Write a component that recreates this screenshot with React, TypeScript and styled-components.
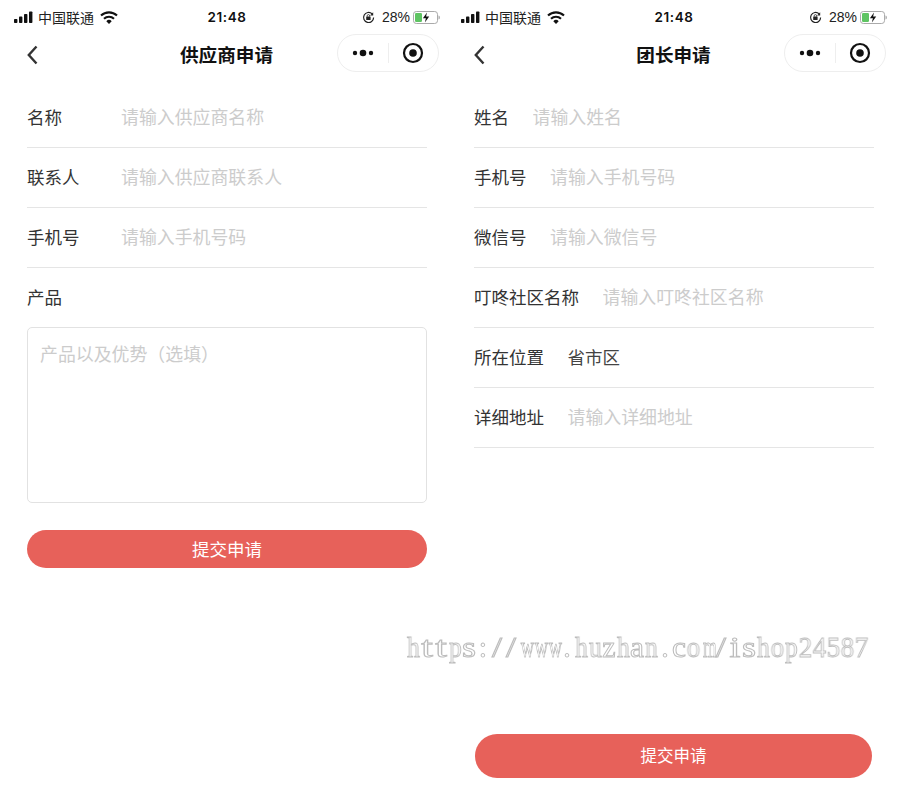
import React from 'react'
import styled, { createGlobalStyle } from 'styled-components'

const GlobalStyle = createGlobalStyle`
	html, body {
		margin: 0;
		padding: 0;
		background: #fff;
	}
	* {
		box-sizing: border-box;
	}
`

const CJK = `"Noto Sans CJK SC", "Noto Sans", sans-serif`
const WATERMARK = 'https://www.huzhan.com/ishop24587'

// cells are all 14px wide, so each letter gets stretched to roughly fill its cell
const CHAR_SCALE: Record<string, number> = {
	w: 0.62, m: 0.6, h: 0.85, n: 0.85, u: 0.85, p: 0.85, o: 0.9, t: 1.4, s: 1.2, i: 1.3, a: 1.05, c: 1.05, z: 1, '.': 1, ':': 1, '/': 1.2,
}

const Screen = styled.div`
	position: relative;
	display: flex;
	width: 900px;
	height: 796px;
	overflow: hidden;
	font-family: ${CJK};
	background: #fff;
`

const Phone = styled.section`
	display: flex;
	flex-direction: column;
	flex: 0 0 447px;
	height: 796px;
`

const StatusBar = styled.div`
	display: grid;
	grid-template-columns: 1fr auto 1fr;
	align-items: center;
	height: 34px;
	padding: 0 7px 0 14px;
	color: #111;
	font-size: 14px;
`

const StatusLeft = styled.div`
	display: flex;
	align-items: center;
	gap: 4px;
`

const Carrier = styled.span`
	margin-right: 2px;
	color: #222;
`

const Clock = styled.div`
	font-family: "Inter", "Liberation Sans", sans-serif;
	font-size: 13.5px;
	font-weight: 600;
	letter-spacing: 0.6px;
`

const StatusRight = styled.div`
	display: flex;
	align-items: center;
	justify-content: flex-end;
	font-family: "Liberation Sans", sans-serif;
	font-size: 14px;
	color: #222;
`

const Percent = styled.span`
	margin: 0 3px 0 7px;
`

const NavBar = styled.header`
	display: grid;
	grid-template-columns: 1fr auto 1fr;
	align-items: center;
	height: 38px;
	padding: 0 8px 0 14px;
`

const BackButton = styled.svg`
	display: block;
	margin: 4px 0 0 13px;
`

const Title = styled.h1`
	margin: 1px 0 0;
	font-size: 18.6px;
	font-weight: 600;
	color: #111;
`

const Capsule = styled.div`
	display: flex;
	align-items: center;
	justify-self: end;
	width: 102px;
	height: 38px;
	border: 1px solid #eee;
	border-radius: 19px;
	background: #fff;
`

const CapsulePart = styled.div`
	display: flex;
	flex: 1;
	align-items: center;
	justify-content: center;
	height: 20px;
	& + & {
		border-left: 1px solid #eee;
	}
`

const Form = styled.form`
	display: flex;
	flex: 1;
	flex-direction: column;
	padding: 16px 20px 18px 27px;
`

const Row = styled.label`
	display: flex;
	align-items: center;
	height: 60px;
	padding-bottom: 3px;
	border-bottom: 1px solid #e5e5e5;
`

const LabelRow = styled(Row)`
	height: 59px;
	padding-bottom: 3px;
	border-bottom: 0;
`

const Label = styled.span<{ $width?: number }>`
	flex: 0 0 ${p => (p.$width ? `${p.$width}px` : 'auto')};
	margin-right: ${p => (p.$width ? 0 : 23.5)}px;
	font-size: 17.5px;
	color: #333;
	white-space: nowrap;
`

const Input = styled.input`
	flex: 1;
	min-width: 0;
	padding: 0;
	border: 0;
	outline: 0;
	background: transparent;
	font-family: ${CJK};
	font-size: 17.9px;
	color: #333;
	&::placeholder {
		color: #ccc;
		opacity: 1;
	}
`

const Value = styled.span`
	font-size: 17.5px;
	color: #444;
`

const TextArea = styled.textarea`
	display: block;
	width: 400px;
	height: 176px;
	padding: 12px;
	border: 1px solid #e2e2e2;
	border-radius: 5px;
	outline: 0;
	resize: none;
	font-family: ${CJK};
	font-size: 17.9px;
	line-height: 26px;
	&::placeholder {
		color: #ccc;
		opacity: 1;
	}
`

const SubmitButton = styled.button<{ $large?: boolean }>`
	display: block;
	width: ${p => (p.$large ? 397 : 400)}px;
	height: ${p => (p.$large ? 44 : 38)}px;
	margin: ${p => (p.$large ? 'auto 0 0 1px' : '27px 0 0')};
	padding: 0 0 2px;
	border: 0;
	border-radius: 22px;
	background: #e7615a;
	color: #fff;
	font-family: ${CJK};
	font-size: ${p => (p.$large ? 16.5 : 17.5)}px;
`

const Watermark = styled.div`
	position: absolute;
	top: 630px;
	left: 406px;
	display: flex;
	color: #fff;
	font-family: "Liberation Serif", serif;
	font-size: 30px;
	line-height: 34px;
	-webkit-text-stroke: 1px #bdbdbd;
`

const WatermarkChar = styled.span<{ $scale: number }>`
	display: block;
	width: 14px;
	text-align: center;
	white-space: pre;
	will-change: transform;
	transform: scaleX(${p => p.$scale});
`

const Signal = () => (
	<svg width="20" height="12" viewBox="0 0 20 12">
		<rect x="0" y="8" width="3.4" height="4" rx="0.8" fill="#111" />
		<rect x="5" y="5.6" width="3.4" height="6.4" rx="0.8" fill="#111" />
		<rect x="10" y="3" width="3.4" height="9" rx="0.8" fill="#111" />
		<rect x="15" y="0.4" width="3.4" height="11.6" rx="0.8" fill="#111" />
	</svg>
)

const Wifi = () => (
	<svg width="18" height="13" viewBox="0 0 18 13">
		<path d="M1 4.6a11.5 11.5 0 0 1 16 0" fill="none" stroke="#111" strokeWidth="2.1" />
		<path d="M4 7.8a7.2 7.2 0 0 1 10 0" fill="none" stroke="#111" strokeWidth="2.1" />
		<path d="M6.3 10.2a3.8 3.8 0 0 1 5.4 0L9 13z" fill="#111" />
	</svg>
)

const RotationLock = () => (
	<svg width="13" height="13" viewBox="0 0 13 13">
		<path d="M11.6 6.5a5 5 0 1 1-1.6-3.7" fill="none" stroke="#222" strokeWidth="1.2" />
		<path d="M11.2 1.2v3.2H8z" fill="#222" />
		<rect x="4.2" y="5.6" width="4.4" height="3.4" rx="0.5" fill="#222" />
		<path d="M5.2 5.6V4.8a1.2 1.2 0 0 1 2.4 0v.8" fill="none" stroke="#222" strokeWidth="0.8" />
	</svg>
)

const Battery = () => (
	<svg width="27" height="13" viewBox="0 0 27 13">
		<rect x="0.5" y="0.5" width="24" height="12" rx="2.8" fill="none" stroke="#aaa" />
		<rect x="2" y="2" width="7" height="9" rx="1.2" fill="#5fc463" />
		<path d="M25.500 4.500c1 .3 1.400 1 1.400 2s-.4 1.700-1.400 2z" fill="#aaa" />
		<path d="M14 1.500 9.900 7.300h3l-1 4.200 4.300-6h-3.100z" fill="#111" />
	</svg>
)

const Back = () => (
	<BackButton width="11" height="20" viewBox="0 0 11 20">
		<path d="M9.500 1.500 1.800 10l7.700 8.500" fill="none" stroke="#333" strokeWidth="2.4" />
	</BackButton>
)

const More = () => (
	<svg width="22" height="8" viewBox="0 0 22 8">
		<circle cx="3" cy="4" r="2.200" fill="#111" />
		<circle cx="11" cy="4" r="3.300" fill="#111" />
		<circle cx="19" cy="4" r="2.200" fill="#111" />
	</svg>
)

const Target = () => (
	<svg width="22" height="22" viewBox="0 0 22 22">
		<circle cx="11" cy="11" r="9" fill="none" stroke="#111" strokeWidth="2.200" />
		<circle cx="11" cy="11" r="3.800" fill="#111" />
	</svg>
)

const Chrome: React.FC<{ title: string }> = ({ title }) => (
	<>
		<StatusBar>
			<StatusLeft>
				<Signal />
				<Carrier>中国联通</Carrier>
				<Wifi />
			</StatusLeft>
			<Clock>21:48</Clock>
			<StatusRight>
				<RotationLock />
				<Percent>28%</Percent>
				<Battery />
			</StatusRight>
		</StatusBar>
		<NavBar>
			<Back />
			<Title>{title}</Title>
			<Capsule>
				<CapsulePart><More /></CapsulePart>
				<CapsulePart><Target /></CapsulePart>
			</Capsule>
		</NavBar>
	</>
)

const supplierFields = [
	{ label: '名称', placeholder: '请输入供应商名称' },
	{ label: '联系人', placeholder: '请输入供应商联系人' },
	{ label: '手机号', placeholder: '请输入手机号码' },
]

const leaderFields = [
	{ label: '姓名', placeholder: '请输入姓名' },
	{ label: '手机号', placeholder: '请输入手机号码' },
	{ label: '微信号', placeholder: '请输入微信号' },
	{ label: '叮咚社区名称', placeholder: '请输入叮咚社区名称' },
	{ label: '所在位置', value: '省市区' },
	{ label: '详细地址', placeholder: '请输入详细地址' },
]

const App = () => (
	<Screen>
		<GlobalStyle />
		<Phone>
			<Chrome title="供应商申请" />
			<Form>
				{supplierFields.map(f => (
					<Row key={f.label}>
						<Label $width={94}>{f.label}</Label>
						<Input placeholder={f.placeholder} />
					</Row>
				))}
				<LabelRow>
					<Label>产品</Label>
				</LabelRow>
				<TextArea placeholder="产品以及优势（选填）" />
				<SubmitButton type="button">提交申请</SubmitButton>
			</Form>
		</Phone>
		<Phone>
			<Chrome title="团长申请" />
			<Form>
				{leaderFields.map(f => (
					<Row key={f.label}>
						<Label>{f.label}</Label>
						{f.value ? <Value>{f.value}</Value> : <Input placeholder={f.placeholder} />}
					</Row>
				))}
				<SubmitButton type="button" $large>提交申请</SubmitButton>
			</Form>
		</Phone>
		<Watermark>
			{WATERMARK.split('').map((c, i) => (
				<WatermarkChar key={i} $scale={CHAR_SCALE[c] ?? 0.9}>{c}</WatermarkChar>
			))}
		</Watermark>
	</Screen>
)

export default App
